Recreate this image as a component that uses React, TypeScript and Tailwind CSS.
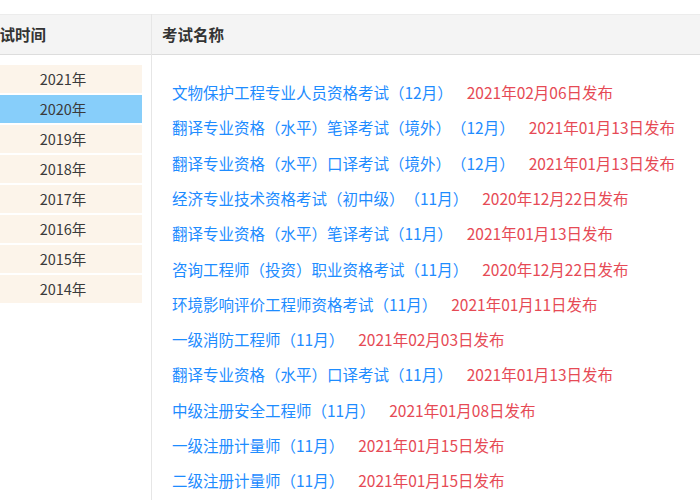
import React from 'react';

const years = ['2021年', '2020年', '2019年', '2018年', '2017年', '2016年', '2015年', '2014年'];

const exams: { name: string; date: string }[] = [
  { name: '文物保护工程专业人员资格考试（12月）', date: '2021年02月06日发布' },
  { name: '翻译专业资格（水平）笔译考试（境外）（12月）', date: '2021年01月13日发布' },
  { name: '翻译专业资格（水平）口译考试（境外）（12月）', date: '2021年01月13日发布' },
  { name: '经济专业技术资格考试（初中级）（11月）', date: '2020年12月22日发布' },
  { name: '翻译专业资格（水平）笔译考试（11月）', date: '2021年01月13日发布' },
  { name: '咨询工程师（投资）职业资格考试（11月）', date: '2020年12月22日发布' },
  { name: '环境影响评价工程师资格考试（11月）', date: '2021年01月11日发布' },
  { name: '一级消防工程师（11月）', date: '2021年02月03日发布' },
  { name: '翻译专业资格（水平）口译考试（11月）', date: '2021年01月13日发布' },
  { name: '中级注册安全工程师（11月）', date: '2021年01月08日发布' },
  { name: '一级注册计量师（11月）', date: '2021年01月15日发布' },
  { name: '二级注册计量师（11月）', date: '2021年01月15日发布' },
];

export default function App() {
  return (
    <div
      className="w-[700px] h-[500px] overflow-hidden bg-white pt-[14px] [text-spacing-trim:space-all]"
      style={{ fontFamily: '"Noto Sans CJK SC", "Noto Sans", sans-serif' }}
    >
      <div className="flex -ml-[26px] h-full">
        {/* left: exam years */}
        <div className="w-[178px] shrink-0 border-r border-[#e6e6e6]">
          <div className="h-[41px] bg-[#f4f4f4] border-t border-[#ececec] border-b border-b-[#dddddd] flex items-center pl-[10px] text-[15.5px] font-semibold text-[#333]">
            考试时间
          </div>
          <div className="pt-[10px] pl-[10px] pr-[9px]">
            {years.map((y) => (
              <div
                key={y}
                className={
                  'h-[30px] border-b-2 border-white flex items-center justify-center text-[14.5px] text-[#3a3a3a] ' +
                  (y === '2020年' ? 'bg-[#87cefa]' : 'bg-[#fcf4ea]')
                }
              >
                {y}
              </div>
            ))}
          </div>
        </div>

        {/* right: exam names */}
        <div className="flex-1">
          <div className="h-[41px] bg-[#f4f4f4] border-t border-[#ececec] border-b border-b-[#dddddd] flex items-center pl-[10px] text-[15.5px] font-semibold text-[#333]">
            考试名称
          </div>
          <div className="pt-[20px] pl-[20px]">
            {exams.map((e, i) => (
              <div key={i} className="h-[35.3px] flex items-center text-[15.5px] whitespace-nowrap">
                <span className="text-[#1e8cff]">{e.name}</span>
                <span className="ml-[14px] text-[#e64a55]">{e.date}</span>
              </div>
            ))}
          </div>
        </div>
      </div>
    </div>
  );
}
